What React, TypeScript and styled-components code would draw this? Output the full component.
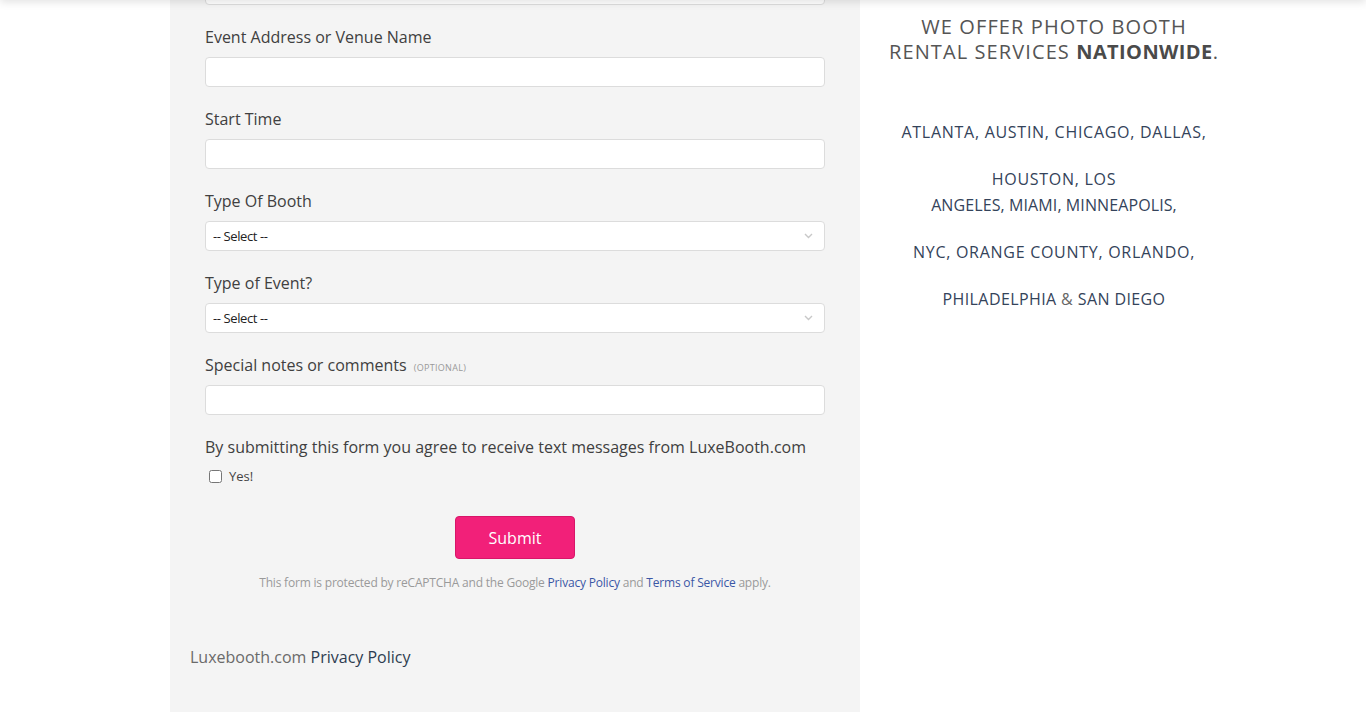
import React from "react";
import styled, { createGlobalStyle } from "styled-components";

const Global = createGlobalStyle`
  html, body { margin: 0; padding: 0; background: #fff; }
  body { font-family: "Open Sans", "Noto Sans", sans-serif; color: #444; overflow: hidden; }
  * { box-sizing: border-box; }
`;

const TopShadow = styled.div`
  position: fixed;
  left: 0;
  right: 0;
  top: -10px;
  height: 10px;
  box-shadow: 0 2px 8px rgba(0, 0, 0, 0.12);
  z-index: 5;
`;

const Page = styled.div`
  display: flex;
  align-items: flex-start;
  padding-left: 170px;
  height: 728px;
`;

const Panel = styled.div`
  width: 690px;
  background: #f4f4f4;
  margin-top: -25px;
  padding: 0 35px 43px 35px;
  display: flex;
  flex-direction: column;
`;

const Field = styled.div`
  display: flex;
  flex-direction: column;
  gap: 8px;
  margin-bottom: 20px;
`;

const Label = styled.label`
  font-size: 16px;
  line-height: 24px;
  height: 24px;
  color: #404040;
`;

const Optional = styled.span`
  font-size: 9px;
  line-height: 0;
  color: #999;
  text-transform: uppercase;
  margin-left: 3px;
  letter-spacing: 0.3px;
`;

const TextInput = styled.input`
  height: 30px;
  width: 100%;
  background: #fff;
  border: 1px solid #dcdcdc;
  border-radius: 4px;
  padding: 0 8px;
  font: inherit;
  font-size: 13px;
  outline: none;
`;

const SelectWrap = styled.div`
  position: relative;
  height: 30px;
`;

const Select = styled.select`
  appearance: none;
  -webkit-appearance: none;
  width: 100%;
  height: 30px;
  background: #fff;
  border: 1px solid #dcdcdc;
  border-radius: 4px;
  padding: 0 7px;
  font-family: "Open Sans", sans-serif;
  font-size: 13px;
  letter-spacing: -0.4px;
  color: #222;
  outline: none;
`;

const Chevron = styled.svg`
  position: absolute;
  right: 12px;
  top: 12px;
  pointer-events: none;
`;

const Agree = styled.div`
  font-size: 16px;
  line-height: 24px;
  color: #404040;
`;

const CheckRow = styled.label`
  display: flex;
  align-items: center;
  height: 22px;
  margin-top: 6px;
  font-size: 13px;
  color: #444;
  input {
    margin: 0 7px 0 4px;
    width: 13px;
    height: 13px;
  }
`;

const Submit = styled.button`
  align-self: center;
  margin-top: 29px;
  width: 120px;
  height: 43px;
  background: #f22079;
  color: #fff;
  border: 1px solid #d81669;
  border-radius: 4px;
  font-family: "Open Sans", sans-serif;
  font-size: 16px;
  font-weight: 500;
`;

const Captcha = styled.p`
  margin: 15px 0 0;
  text-align: center;
  font-size: 12px;
  line-height: 18px;
  letter-spacing: -0.2px;
  color: #9a9a9a;
`;

const Link = styled.a`
  color: #3b57a6;
  text-decoration: none;
`;

const Footer = styled.div`
  margin: 53px 0 0 -15px;
  font-size: 16px;
  line-height: 24px;
  color: #6a6a6a;
`;

const FooterLink = styled.a`
  color: #2e3c50;
  text-decoration: none;
`;

const Side = styled.div`
  width: 388px;
  padding-top: 14px;
  text-align: center;
`;

const Heading = styled.h2`
  margin: 0;
  font-size: 20px;
  line-height: 25px;
  font-weight: 400;
  letter-spacing: 1.1px;
  color: #555;
  b {
    font-weight: 700;
    letter-spacing: 0.4px;
    color: #4a4a4a;
  }
`;

const Cities = styled.div`
  margin-top: 55px;
  display: flex;
  flex-direction: column;
  gap: 21px;
`;

const City = styled.p<{ $spacing?: number }>`
  margin: 0;
  font-size: 16px;
  line-height: 26px;
  letter-spacing: ${(p) => p.$spacing ?? 0.72}px;
  color: #34435a;
`;

const Tight = styled.span`
  letter-spacing: 0.1px;
`;

const Amp = styled.span`
  color: #666;
`;

const SelectField: React.FC<{ label: string }> = ({ label }) => (
  <Field>
    <Label>{label}</Label>
    <SelectWrap>
      <Select defaultValue="">
        <option value="">-- Select --</option>
      </Select>
      <Chevron width="9" height="6" viewBox="0 0 9 6">
        <path d="M1 1l3.5 3.5L8 1" fill="none" stroke="#c8c8c8" strokeWidth="1.4" />
      </Chevron>
    </SelectWrap>
  </Field>
);

const InputField: React.FC<{ label?: React.ReactNode }> = ({ label }) => (
  <Field>
    {label && <Label>{label}</Label>}
    <TextInput type="text" />
  </Field>
);

export default function App() {
  return (
    <>
      <Global />
      <TopShadow />
      <Page>
        <Panel>
          <InputField />
          <InputField label="Event Address or Venue Name" />
          <InputField label="Start Time" />
          <SelectField label="Type Of Booth" />
          <SelectField label="Type of Event?" />
          <InputField
            label={
              <>
                Special notes or comments <Optional>(Optional)</Optional>
              </>
            }
          />
          <Agree>By submitting this form you agree to receive text messages from LuxeBooth.com</Agree>
          <CheckRow>
            <input type="checkbox" />
            Yes!
          </CheckRow>
          <Submit type="button">Submit</Submit>
          <Captcha>
            This form is protected by reCAPTCHA and the Google <Link href="#">Privacy Policy</Link> and{" "}
            <Link href="#">Terms of Service</Link> apply.
          </Captcha>
          <Footer>
            Luxebooth.com <FooterLink href="#">Privacy Policy</FooterLink>
          </Footer>
        </Panel>
        <Side>
          <Heading>
            WE OFFER PHOTO BOOTH
            <br />
            RENTAL SERVICES <b>NATIONWIDE</b>.
          </Heading>
          <Cities>
            <City>ATLANTA, AUSTIN, CHICAGO, DALLAS,</City>
            <City>
              HOUSTON, LOS
              <br />
              <Tight>ANGELES, MIAMI, MINNEAPOLIS,</Tight>
            </City>
            <City>NYC, ORANGE COUNTY, ORLANDO,</City>
            <City $spacing={0.4}>
              PHILADELPHIA <Amp>&amp;</Amp> SAN DIEGO
            </City>
          </Cities>
        </Side>
      </Page>
    </>
  );
}
